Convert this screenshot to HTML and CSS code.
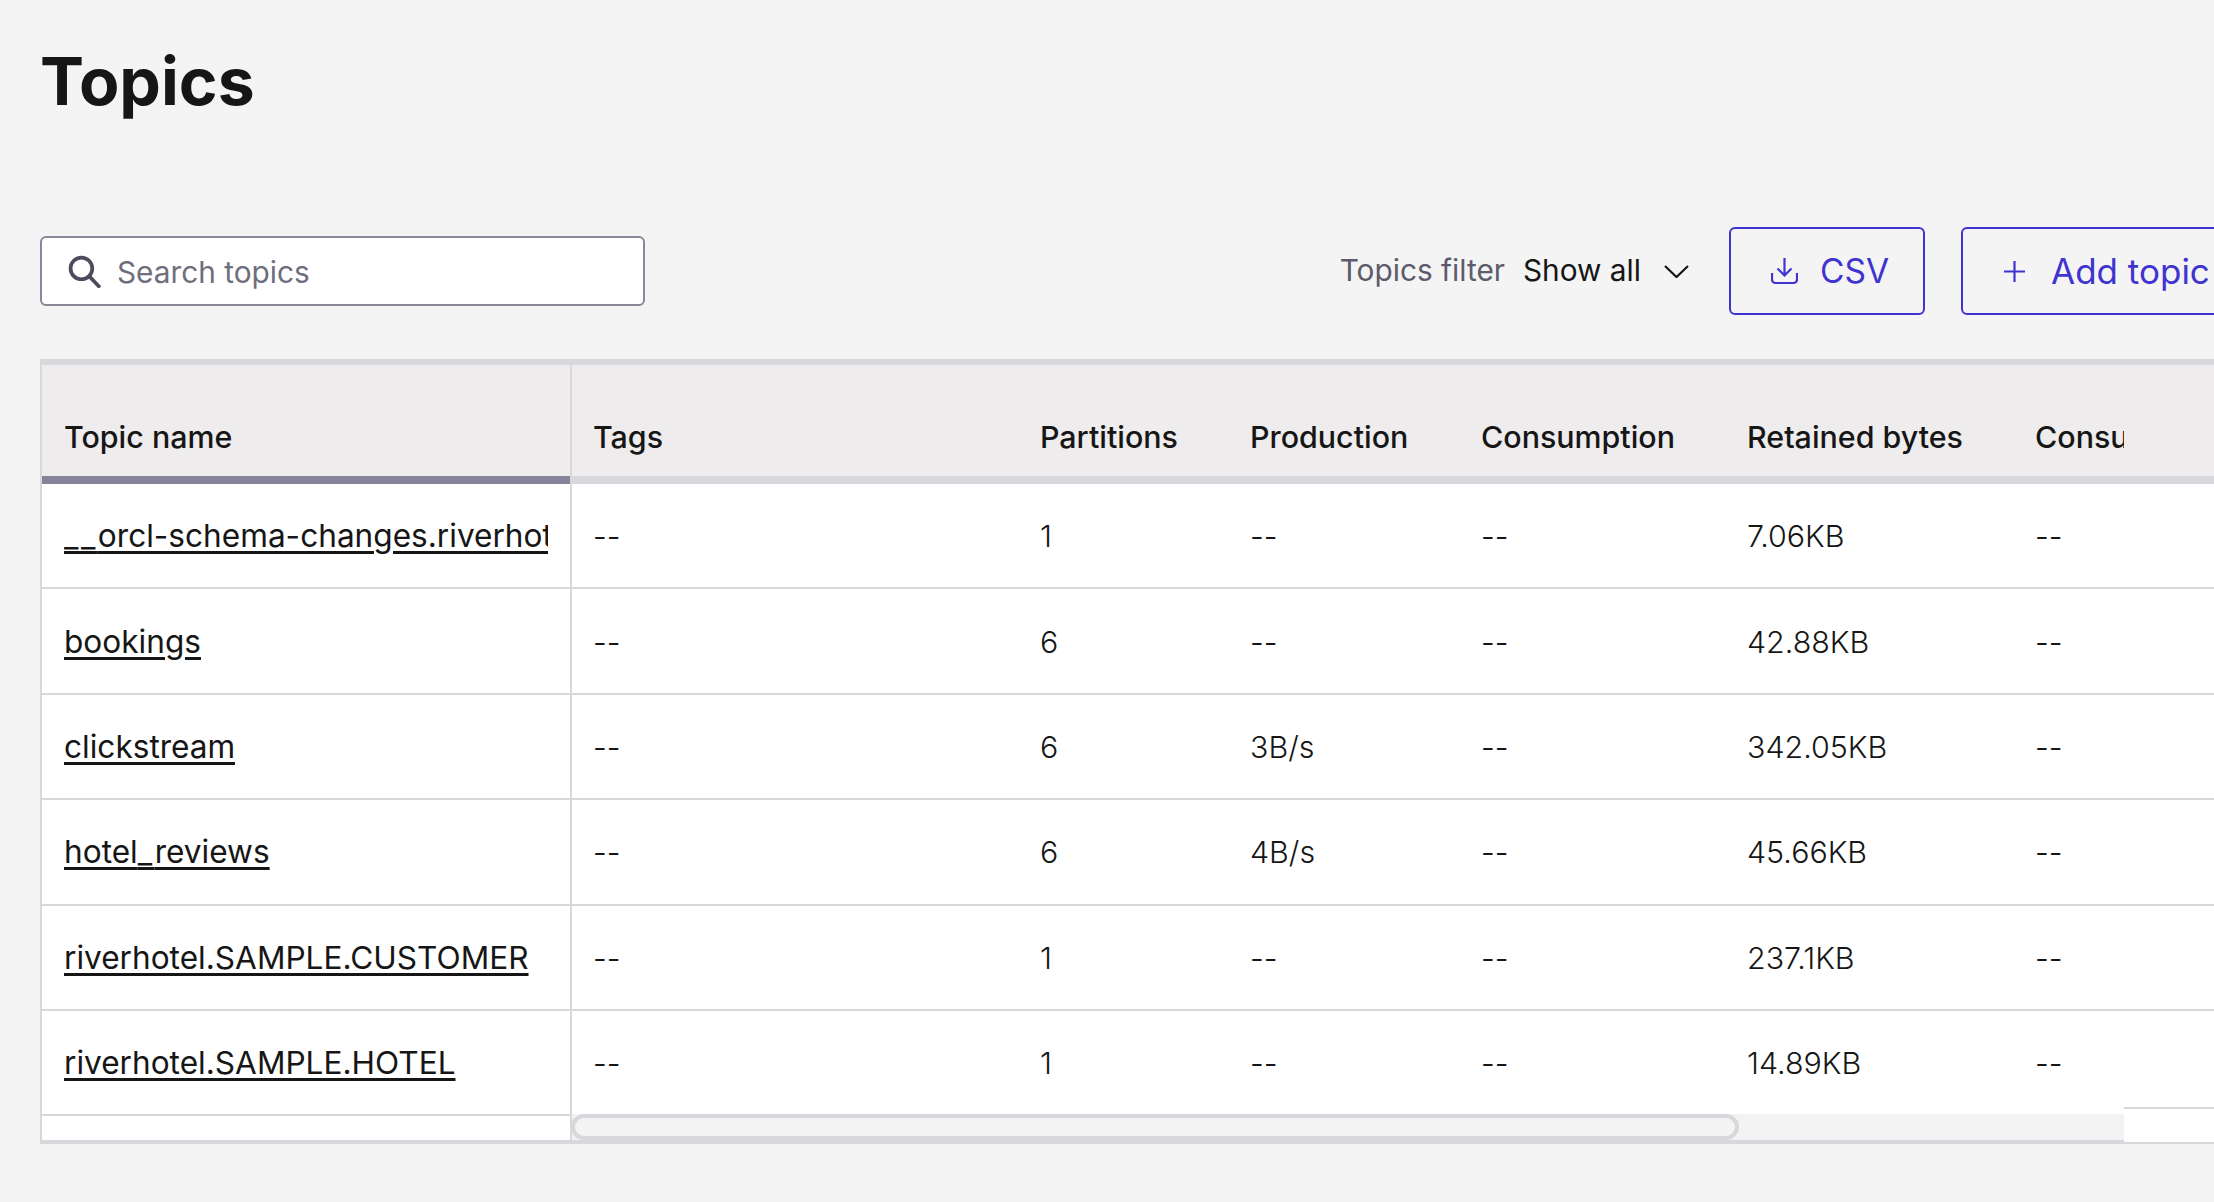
FILE: index.html
```html
<!DOCTYPE html>
<html lang="en">
<head>
    <meta charset="UTF-8">
    <meta name="viewport" content="width=device-width, initial-scale=1.0">
    <title>Topics</title>
    <link rel="stylesheet" href="styles.css">
</head>
<body>
    <h1>Topics</h1>

    <div class="toolbar">
        <label class="search">
            <svg class="search-icon" viewBox="0 0 32 32" fill="none" stroke="#4d4b5c" stroke-width="3.6">
                <circle cx="13" cy="13" r="10.500"/>
                <path d="M20.500 20.500 31 31.500"/>
            </svg>
            <span class="placeholder">Search topics</span>
        </label>

        <div class="actions">
            <span class="filter-label">Topics filter</span>
            <span class="filter-value">Show all</span>
            <svg class="chevron" viewBox="0 0 25 13" fill="none" stroke="#161616" stroke-width="2.2">
                <path d="M1 1 12.500 12 24 1"/>
            </svg>
            <a class="btn btn-csv" href="#csv">
                <svg class="btn-icon" viewBox="0 0 27 26" fill="none" stroke="#3f34cf" stroke-width="2.2">
                    <path d="M13.500 0v17M6.500 10.500l7 7 7-7"/>
                    <path d="M1 15v6.500a3.500 3.500 0 0 0 3.500 3.500h18a3.500 3.500 0 0 0 3.500-3.500V15"/>
                </svg>
                CSV
            </a>
            <a class="btn btn-add" href="#add">
                <svg class="btn-plus" viewBox="0 0 21 21" fill="none" stroke="#3f34cf" stroke-width="2.2">
                    <path d="M10.500 0v21M0 10.500h21"/>
                </svg>
                Add topic
            </a>
        </div>
    </div>

    <div class="topics-table">
        <!-- fixed first column -->
        <div class="pane pane-left">
            <div class="head-row"><span class="cell">Topic name</span></div>
            <div class="row"><a class="cell topic-link" href="#t1"><span class="us">__</span>orcl-schema-changes.riverhotel.SAMPLE.CUSTOMER</a></div>
            <div class="row"><a class="cell topic-link" href="#t2">bookings</a></div>
            <div class="row"><a class="cell topic-link" href="#t3">clickstream</a></div>
            <div class="row"><a class="cell topic-link" href="#t4">hotel<span class="us">_</span>reviews</a></div>
            <div class="row"><a class="cell topic-link" href="#t5">riverhotel.SAMPLE.CUSTOMER</a></div>
            <div class="row"><a class="cell topic-link" href="#t6">riverhotel.SAMPLE.HOTEL</a></div>
            <div class="pane-spacer"></div>
        </div>

        <!-- scrolling columns -->
        <div class="pane pane-middle">
            <div class="scroll-body">
                <div class="head-row cols">
                    <span class="cell">Tags</span>
                    <span class="cell">Partitions</span>
                    <span class="cell">Production</span>
                    <span class="cell">Consumption</span>
                    <span class="cell">Retained bytes</span>
                    <span class="cell">Consumers</span>
                </div>
                <div class="row cols">
                    <span class="cell">--</span><span class="cell">1</span><span class="cell">--</span>
                    <span class="cell">--</span><span class="cell">7.06KB</span><span class="cell">--</span>
                </div>
                <div class="row cols">
                    <span class="cell">--</span><span class="cell">6</span><span class="cell">--</span>
                    <span class="cell">--</span><span class="cell">42.88KB</span><span class="cell">--</span>
                </div>
                <div class="row cols">
                    <span class="cell">--</span><span class="cell">6</span><span class="cell">3B/s</span>
                    <span class="cell">--</span><span class="cell">342.05KB</span><span class="cell">--</span>
                </div>
                <div class="row cols">
                    <span class="cell">--</span><span class="cell">6</span><span class="cell">4B/s</span>
                    <span class="cell">--</span><span class="cell">45.66KB</span><span class="cell">--</span>
                </div>
                <div class="row cols">
                    <span class="cell">--</span><span class="cell">1</span><span class="cell">--</span>
                    <span class="cell">--</span><span class="cell">237.1KB</span><span class="cell">--</span>
                </div>
                <div class="row cols">
                    <span class="cell">--</span><span class="cell">1</span><span class="cell">--</span>
                    <span class="cell">--</span><span class="cell">14.89KB</span><span class="cell">--</span>
                </div>
            </div>
            <div class="scroll-track">
                <div class="scroll-thumb"></div>
            </div>
        </div>

        <!-- fixed last column -->
        <div class="pane pane-right">
            <div class="head-row"></div>
            <div class="row"></div>
            <div class="row"></div>
            <div class="row"></div>
            <div class="row"></div>
            <div class="row"></div>
            <div class="row row-short"></div>
        </div>
    </div>
</body>
</html>
```

FILE: styles.css
```css
/* Basic Resets */
* {
    margin: 0;
    padding: 0;
    box-sizing: border-box;
}

body {
    font-family: Inter, 'Liberation Sans', sans-serif;
    background: #f4f4f4;
    color: #161616;
    height: 1202px;
    padding-left: 40px;
    overflow: hidden;
}

h1 {
    font-size: 66px;
    font-weight: 700;
    line-height: 80px;
    padding-top: 41px;
    height: 227px;
}

/* Toolbar */
.toolbar {
    width: 2207px;
    height: 88px;
    display: flex;
    justify-content: space-between;
    align-items: center;
}

.search {
    width: 605px;
    height: 70px;
    display: flex;
    align-items: center;
    padding-left: 26px;
    background: #fff;
    border: 2px solid #8a8899;
    border-radius: 6px;
}

.search-icon {
    width: 33px;
    height: 33px;
    margin-right: 16px;
}

.placeholder {
    font-size: 29.8px;
    padding-top: 2px;
    color: #6f6e7d;
}

.actions {
    display: flex;
    align-items: center;
}

.filter-label {
    font-size: 29.8px;
    color: #5d5b6b;
    margin-right: 18px;
    padding-bottom: 2px;
}

.filter-value {
    font-size: 29.8px;
    margin-right: 23px;
    padding-bottom: 2px;
}

.chevron {
    width: 25px;
    height: 13px;
    margin-right: 40px;
}

.btn {
    height: 88px;
    display: flex;
    align-items: center;
    font-size: 35px;
    color: #3f34cf;
    text-decoration: none;
    border: 2px solid #3f34cf;
    border-radius: 6px;
}

.btn-csv {
    width: 196px;
    padding-left: 40px;
    margin-right: 36px;
    font-size: 33.5px;
}

.btn-icon {
    width: 27px;
    height: 26px;
    margin-right: 22px;
}

.btn-add {
    width: 286px;
    padding-left: 41px;
}

.btn-plus {
    width: 21px;
    height: 21px;
    margin-right: 26px;
}

/* Table */
.topics-table {
    margin-top: 44px;
    display: flex;
    border-top: 6px solid #d8d7dc;
    border-bottom: 2px solid #d8d7dc;
}

.pane-left {
    width: 532px;
    flex-shrink: 0;
    background: #fff;
    border-left: 2px solid #d8d7dc;
    border-right: 2px solid #d8d7dc;
    border-bottom: 2px solid #d8d7dc;
}

.pane-middle {
    width: 1552px;
    flex-shrink: 0;
    border-bottom: 2px solid #d8d7dc;
}

.pane-right {
    flex: 1;
    background: #fff;
}

.head-row {
    height: 119px;
    display: flex;
    align-items: flex-end;
    padding-bottom: 20px;
    background: #eeeced;
    border-bottom: 8px solid #d8d7dc;
    font-size: 30.4px;
    font-weight: 500;
    line-height: 38px;
}

.pane-left .head-row {
    border-bottom-color: #86849a;
}

.pane-left .head-row .cell {
    padding-left: 22px;
}

.row {
    height: 105.4px;
    display: flex;
    align-items: center;
    padding-top: 1px;
    background: #fff;
    border-bottom: 2px solid #d8d7dc;
    font-size: 30.4px;
    font-weight: 300;
}

.row-short {
    height: 98px;
}

.pane-spacer {
    height: 24px;
}

.cell {
    display: block;
    padding-left: 21px;
    white-space: nowrap;
    overflow: hidden;
}

.topic-link {
    margin-left: 22px;
    padding-left: 0;
    max-width: 484px;
    color: #161616;
    font-size: 31.6px;
    font-weight: 400;
    text-decoration: underline;
    text-decoration-thickness: 3px;
    text-underline-offset: 4px;
    line-height: 46px;
}

/* underscores are wider in the original face */
.us {
    letter-spacing: 2.5px;
}

.scroll-body {
    height: 749px;
    overflow: hidden;
}

.cols {
    display: grid;
    grid-template-columns: 447px 210px 231px 266px 288px 110px;
}

.scroll-track {
    height: 26px;
    background: #f3f3f3;
}

.scroll-thumb {
    width: 1168px;
    height: 26px;
    margin-left: -1px;
    background: #f4f4f4;
    border: 4px solid #d8d7dc;
    border-radius: 13px;
}
```
